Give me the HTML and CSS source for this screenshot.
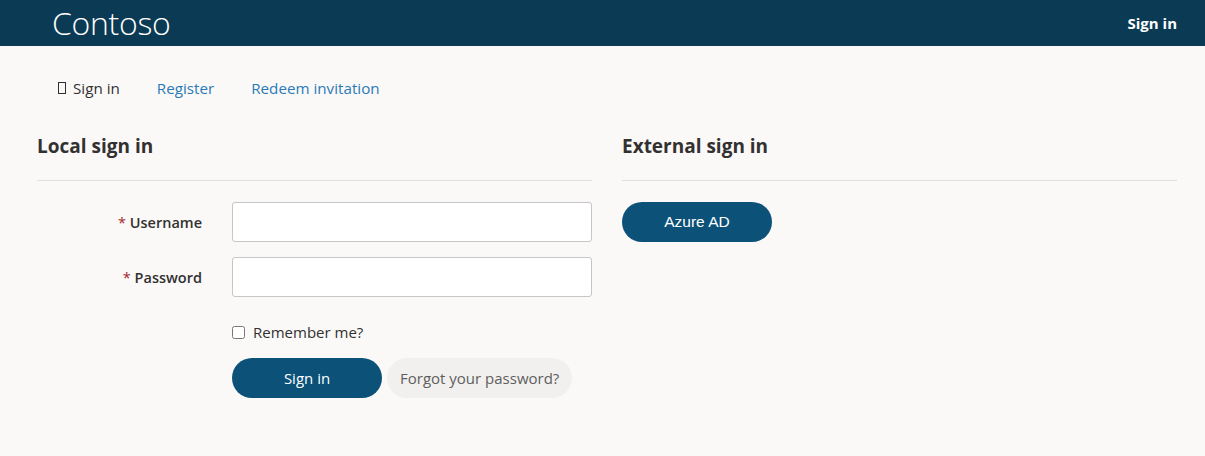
FILE: index.html
```html
<!DOCTYPE html>
<html>
<head>
<meta charset="utf-8">
<title>Contoso</title>
<link rel="stylesheet" href="styles.css">
</head>
<body>
<header class="topbar">
  <div class="brand">Contoso</div>
  <a class="top-link" href="#">Sign in</a>
</header>
<nav class="tabs">
  <a class="tab active" href="#"><span class="tab-icon"></span>Sign in</a>
  <a class="tab" href="#">Register</a>
  <a class="tab" href="#">Redeem invitation</a>
</nav>
<main class="columns">
  <section class="col">
    <h2 class="col-title">Local sign in</h2>
    <div class="rule"></div>
    <form class="form">
      <div class="row">
        <label class="label"><span class="req">*</span> Username</label>
        <input class="input" type="text">
      </div>
      <div class="row">
        <label class="label"><span class="req">*</span> Password</label>
        <input class="input" type="password">
      </div>
      <div class="row row-check">
        <span class="label"></span>
        <label class="check"><input type="checkbox" class="cb"> Remember me?</label>
      </div>
      <div class="row row-actions">
        <span class="label"></span>
        <div class="actions">
          <button type="button" class="btn primary">Sign in</button>
          <button type="button" class="btn secondary">Forgot your password?</button>
        </div>
      </div>
    </form>
  </section>
  <section class="col">
    <h2 class="col-title">External sign in</h2>
    <div class="rule"></div>
    <div class="ext">
      <button type="button" class="btn primary azure">Azure AD</button>
    </div>
  </section>
</main>
</body>
</html>
```
FILE: styles.css
```css
* { box-sizing: border-box; }
html, body { margin: 0; padding: 0; }
body {
  background: #faf9f8;
  font-family: "Open Sans", "Noto Sans", sans-serif;
  color: #323130;
  font-size: 15px;
}
.topbar {
  height: 46px;
  background: #0b3a54;
  display: flex;
  align-items: center;
  justify-content: space-between;
  padding: 0 28px 0 52px;
}
.brand {
  color: #fff;
  font-weight: 300;
  font-size: 32px;
  line-height: 46px;
  letter-spacing: -0.3px;
}
.top-link {
  color: #fff;
  font-weight: 700;
  font-size: 15px;
  text-decoration: none;
}
.tabs {
  display: flex;
  padding: 0 0 0 43px;
  margin-top: 30px;
  height: 24px;
  align-items: center;
}
.tab {
  font-size: 15.2px;
  color: #2b79b6;
  text-decoration: none;
  padding: 0 15px;
  display: flex;
  align-items: center;
}
.tab + .tab { margin-left: 7px; }
.tab.active { color: #323130; }
.tab-icon {
  display: inline-block;
  width: 8px;
  height: 12px;
  border: 1px solid #323130;
  margin-right: 7px;
}
.columns {
  display: flex;
  gap: 30px;
  padding: 0 28px 0 37px;
  margin-top: 33px;
}
.col { width: 555px; }
.col-title {
  margin: 0;
  font-size: 19px;
  font-weight: 700;
  height: 26px;
  line-height: 26px;
  color: #323130;
}
.rule {
  margin-top: 21px;
  border-top: 1px solid #e1dfdd;
}
.form { margin-top: 21px; }
.row {
  display: flex;
  align-items: center;
  margin-bottom: 15px;
}
.label {
  width: 195px;
  flex: none;
  text-align: right;
  padding-right: 30px;
  font-weight: 600;
  font-size: 14.5px;
}
.req { color: #a4262c; font-weight: 400; }
.input {
  width: 360px;
  height: 40px;
  border: 1px solid #c8c6c4;
  border-radius: 3px;
  background: #fff;
  margin: 0;
}
.row-check { margin-top: 25px; margin-bottom: 16px; height: 20px; }
.check {
  display: flex;
  align-items: center;
  font-size: 15px;
}
.cb {
  margin: 0 8px 0 0;
  width: 13px;
  height: 13px;
}
.actions { display: flex; gap: 5px; }
.btn {
  height: 40px;
  border-radius: 20px;
  border: none;
  font-family: "Open Sans", sans-serif;
  font-size: 15px;
  cursor: pointer;
}
.primary {
  background: #0b5178;
  color: #fff;
  width: 150px;
}
.secondary {
  background: #f1f0ef;
  color: #605e5c;
  padding: 0 13px;
}
.ext { margin-top: 21px; }
.azure {
  font-family: "Liberation Sans", Arial, sans-serif;
  font-size: 15.5px;
}
```
